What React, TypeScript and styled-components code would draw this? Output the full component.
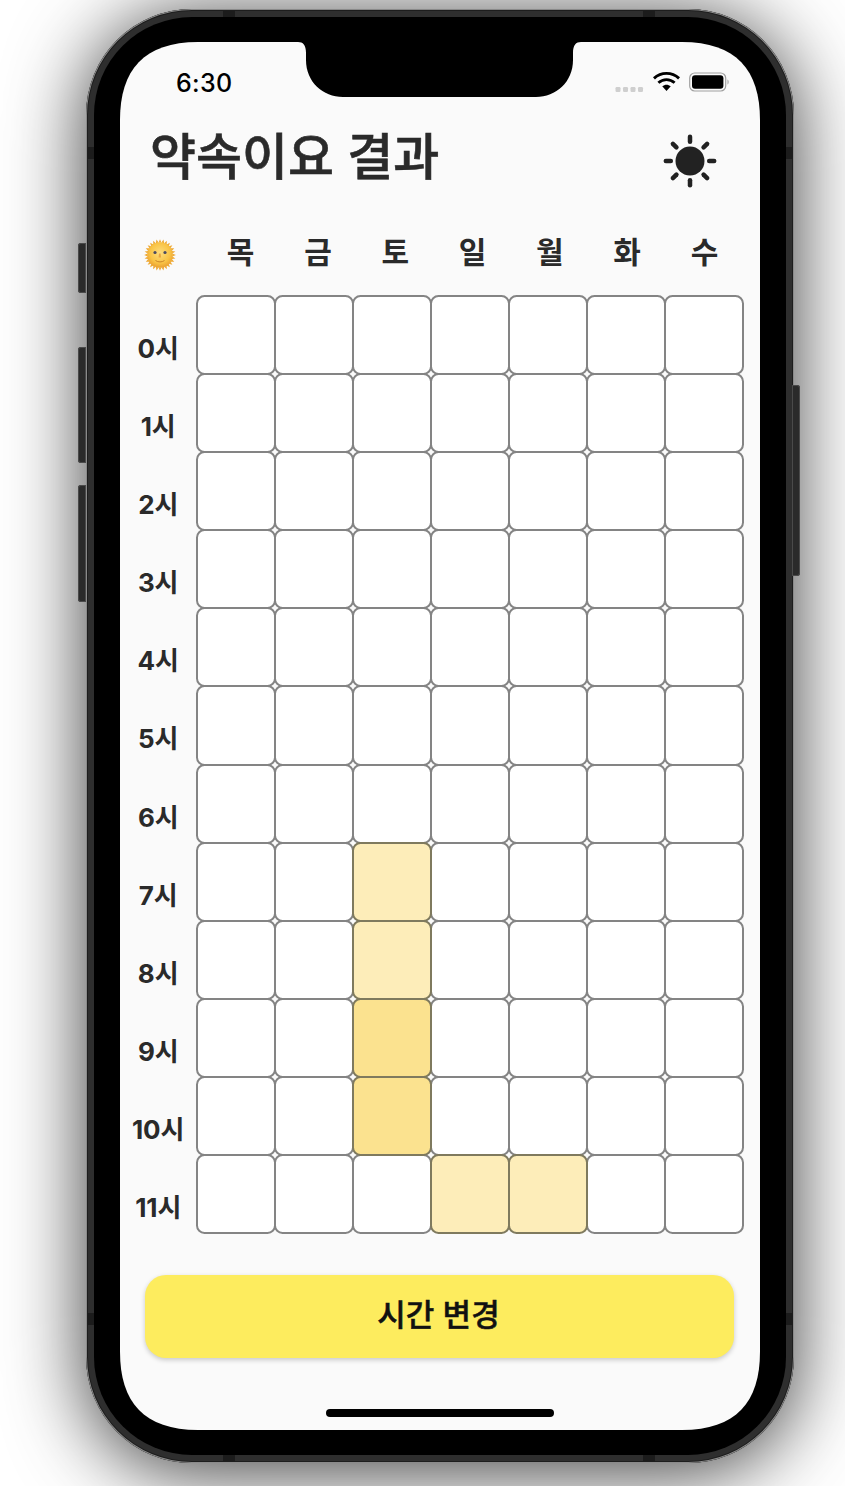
import React from "react";
import styled, { createGlobalStyle } from "styled-components";

const KR = `Inter, "Noto Sans CJK KR", "Noto Sans", sans-serif`;

const Global = createGlobalStyle`
  html, body { margin: 0; padding: 0; background: #fff; }
`;

const Page = styled.div`
  width: 845px;
  height: 1486px;
  padding: 9px 0 0 86px;
  box-sizing: border-box;
  overflow: hidden;
  background: #fff;
`;

const Device = styled.div`
  position: relative;
  width: 708px;
  height: 1454px;
  box-sizing: border-box;
  padding: 8px 8px;
  border-radius: 106px;
  background: #2e2e2e;
  box-shadow: inset 0 0 0 1px #8a8a8a, inset 0 0 0 2px #1d1d1d, 0 8px 80px rgba(0, 0, 0, 0.78);
`;

const SideButton = styled.div<{ $top: number; $height: number; $right?: boolean }>`
  position: absolute;
  top: ${(p) => p.$top}px;
  height: ${(p) => p.$height}px;
  width: 8px;
  background: #2a2a2a;
  box-shadow: inset 0 0 0 1px #4a4a4a;
  ${(p) => (p.$right ? "right: -6px; border-radius: 0 3px 3px 0;" : "left: -8px; border-radius: 3px 0 0 3px;")}
`;

const AntennaBand = styled.div<{ $side: "top" | "bottom" | "left" | "right"; $at: number }>`
  position: absolute;
  background: #1c1c1c;
  ${(p) =>
    p.$side === "top" || p.$side === "bottom"
      ? `${p.$side}: 1px; left: ${p.$at}px; width: 12px; height: 7px;`
      : `${p.$side}: 1px; top: ${p.$at}px; width: 7px; height: 12px;`}
`;

const Bezel = styled.div`
  position: relative;
  width: 100%;
  height: 100%;
  box-sizing: border-box;
  padding: 25px 26px 25px 26px;
  border-radius: 98px;
  background: #000;
`;

const Screen = styled.div`
  position: relative;
  width: 640px;
  height: 1388px;
  overflow: hidden;
  clip-path: path("M0 78C0 28 24 0 78 0H562C616 0 640 28 640 78V1310C640 1360 616 1388 562 1388H78C24 1388 0 1360 0 1310Z");
  background: #fafafa;
  display: flex;
  flex-direction: column;
`;

const NotchShape = styled.svg`
  position: absolute;
  top: 0;
  left: 178px;
  width: 283px;
  height: 56px;
`;

const StatusBar = styled.div`
  height: 58px;
  display: flex;
  align-items: flex-start;
  padding: 26px 29px 0 56px;
  box-sizing: border-box;
`;

const Clock = styled.span`
  font: 500 25px/30px Inter, "Liberation Sans", sans-serif;
  color: #000;
  letter-spacing: 0.3px;
`;

const StatusIcons = styled.div`
  margin-left: auto;
  display: flex;
  align-items: flex-start;
`;

const Header = styled.div`
  height: 125px;
  display: flex;
  align-items: flex-start;
  justify-content: space-between;
  padding: 0 42px 0 30px;
  box-sizing: border-box;
`;

const Title = styled.h1`
  margin: 21px 0 0;
  font: 500 50px/72px ${KR};
  -webkit-text-stroke: 0.6px #2a2a2a;
  color: #2a2a2a;
  letter-spacing: 0;
`;

const DayRow = styled.div`
  height: 71px;
  box-sizing: border-box;
  padding: 14px 0 0 24px;
  display: flex;
`;

const EmojiSlot = styled.div`
  width: 58px;
`;

const DayLabels = styled.div`
  display: grid;
  grid-template-columns: repeat(7, 77.3px);
`;

const DayLabel = styled.span`
  font: 700 30px/44px ${KR};
  text-align: center;
  color: #2a2a2a;
  height: 44px;
  margin-top: -9px;
`;

const Board = styled.div`
  display: flex;
`;

const Hours = styled.div`
  width: 77.4px;
  display: flex;
  flex-direction: column;
`;

const HourLabel = styled.span`
  height: 78.1px;
  padding: 35px 1px 0 0;
  box-sizing: border-box;
  font: 700 26px/36px ${KR};
  color: #2a2a2a;
  text-align: center;
  letter-spacing: -0.1px;
  white-space: nowrap;
`;

const Grid = styled.div`
  display: grid;
  grid-template-columns: repeat(7, 78px);
  grid-auto-rows: 78.1px;
`;

const fills = ["#ffffff", "#fdedb9", "#fbe28f"];

const Cell = styled.div<{ $level: number }>`
  position: relative;
  z-index: ${(p) => (p.$level ? 1 : 0)};
  box-sizing: border-box;
  margin: -1px;
  border: 2px solid ${(p) => (p.$level ? "#7f7a5e" : "#848484")};
  border-radius: 8.5px;
  background: ${(p) => fills[p.$level]};
`;

const ChangeButton = styled.button`
  display: block;
  margin: 41.8px 0 0 25px;
  width: 589px;
  height: 83px;
  flex: none;
  border: 0;
  border-radius: 21px;
  background: #fdec5e;
  box-shadow: 0 2px 5px rgba(0, 0, 0, 0.2);
  font: 500 31px/79px ${KR};
  -webkit-text-stroke: 0.5px #111;
  color: #111;
  padding: 0 2px 4px 0;
`;

const HomeIndicator = styled.div`
  position: absolute;
  left: 206px;
  bottom: 13px;
  width: 228px;
  height: 8px;
  border-radius: 4px;
  background: #000;
`;

const hours = Array.from({ length: 12 }, (_, i) => `${i}시`);
const days = ["목", "금", "토", "일", "월", "화", "수"];
const highlights: Record<string, number> = {
  "7-2": 1,
  "8-2": 1,
  "9-2": 2,
  "10-2": 2,
  "11-3": 1,
  "11-4": 1,
};

const bands: { side: "top" | "bottom" | "left" | "right"; at: number }[] = [
  { side: "top", at: 137 },
  { side: "top", at: 557 },
  { side: "bottom", at: 137 },
  { side: "bottom", at: 557 },
  { side: "left", at: 138 },
  { side: "left", at: 1304 },
  { side: "right", at: 138 },
  { side: "right", at: 1304 },
];

const Wifi = () => (
  <svg width="27" height="24" viewBox="0 0 28 24" style={{ marginTop: 2, marginLeft: 9 }}>
    <path d="M1 8.2C8.4 1.4 19.6 1.4 27 8.2" fill="none" stroke="#000" strokeWidth="3" />
    <path d="M5.6 12.8C10.6 8.4 17.4 8.4 22.4 12.8" fill="none" stroke="#000" strokeWidth="3" />
    <path d="M9.6 16.4C12.4 14.2 15.6 14.2 18.4 16.4L14 21.4Z" fill="#000" />
  </svg>
);

const Battery = () => (
  <svg width="42" height="22" viewBox="0 0 42 22" style={{ marginTop: 4, marginLeft: 9 }}>
    <rect x="0.7" y="1" width="36" height="18" rx="5" fill="none" stroke="#a0a0a0" strokeWidth="1.2" />
    <rect x="3" y="3.2" width="31.4" height="13.6" rx="3" fill="#000" />
    <path d="M38.5 7.5C40 8 40 12 38.5 12.5Z" fill="#a0a0a0" />
  </svg>
);

const Dots = () => (
  <svg width="29" height="8" viewBox="0 0 29 8" style={{ marginTop: 18 }}>
    {[0.5, 8, 15.5, 23].map((x) => (
      <rect key={x} x={x} y="1" width="5" height="5" rx="1.2" fill="#cfcfcf" />
    ))}
  </svg>
);

const SunToggle = () => {
  const rays = [0, 45, 90, 135, 180, 225, 270, 315];
  return (
    <svg width="56" height="56" viewBox="0 0 56 56" style={{ marginTop: 33 }}>
      <circle cx="28" cy="28" r="14.5" fill="#222" />
      {rays.map((a) => (
        <line
          key={a}
          x1="28"
          y1="3.8"
          x2="28"
          y2="8.8"
          stroke="#222"
          strokeWidth="4.5"
          strokeLinecap="round"
          transform={`rotate(${a} 28 28)`}
        />
      ))}
    </svg>
  );
};

const SunFace = () => {
  const spikes = Array.from({ length: 28 }, (_, i) => (i * 360) / 28);
  return (
    <svg width="32" height="32" viewBox="0 0 32 32">
      <defs>
        <radialGradient id="face" cx="50%" cy="42%" r="60%">
          <stop offset="0%" stopColor="#fddc7c" />
          <stop offset="65%" stopColor="#f9c445" />
          <stop offset="100%" stopColor="#e99c2e" />
        </radialGradient>
      </defs>
      {spikes.map((a) => (
        <path key={a} d="M14.6 3.6L16 0.2L17.4 3.6Z" fill="#eea933" transform={`rotate(${a} 16 16)`} />
      ))}
      <circle cx="16" cy="16" r="12.8" fill="url(#face)" />
      <circle cx="11" cy="13.5" r="1.6" fill="#4a4b62" />
      <circle cx="21" cy="13.5" r="1.6" fill="#4a4b62" />
      <path d="M15 14.5L14.6 18.4H17L16.6 14.5" fill="#e9a63e" />
      <path d="M11.5 21.5C14 23.4 18 23.4 20.5 21.5" stroke="#c98228" strokeWidth="1" fill="none" />
    </svg>
  );
};

export default function App() {
  return (
    <Page>
      <Global />
      <Device>
        <SideButton $top={234} $height={50} />
        <SideButton $top={338} $height={116} />
        <SideButton $top={476} $height={117} />
        <SideButton $right $top={376} $height={191} />
        {bands.map((b) => (
          <AntennaBand key={`${b.side}${b.at}`} $side={b.side} $at={b.at} />
        ))}
        <Bezel>
          <Screen>
            <StatusBar>
              <Clock>6:30</Clock>
              <StatusIcons>
                <Dots />
                <Wifi />
                <Battery />
              </StatusIcons>
            </StatusBar>
            <Header>
              <Title>약속이요 결과</Title>
              <SunToggle />
            </Header>
            <DayRow>
              <EmojiSlot>
                <SunFace />
              </EmojiSlot>
              <DayLabels>
                {days.map((d) => (
                  <DayLabel key={d}>{d}</DayLabel>
                ))}
              </DayLabels>
            </DayRow>
            <Board>
              <Hours>
                {hours.map((h) => (
                  <HourLabel key={h}>{h}</HourLabel>
                ))}
              </Hours>
              <Grid>
                {hours.flatMap((_, r) =>
                  days.map((_, c) => <Cell key={`${r}-${c}`} $level={highlights[`${r}-${c}`] ?? 0} />),
                )}
              </Grid>
            </Board>
            <ChangeButton>시간 변경</ChangeButton>
            <HomeIndicator />
            <NotchShape viewBox="0 0 283 56">
              <path d="M0 0H283C278 0 275 3 275 11V18C275 40 258 55 238 55H45C25 55 8 40 8 18V11C8 3 5 0 0 0Z" fill="#000" />
            </NotchShape>
          </Screen>
        </Bezel>
      </Device>
    </Page>
  );
}
